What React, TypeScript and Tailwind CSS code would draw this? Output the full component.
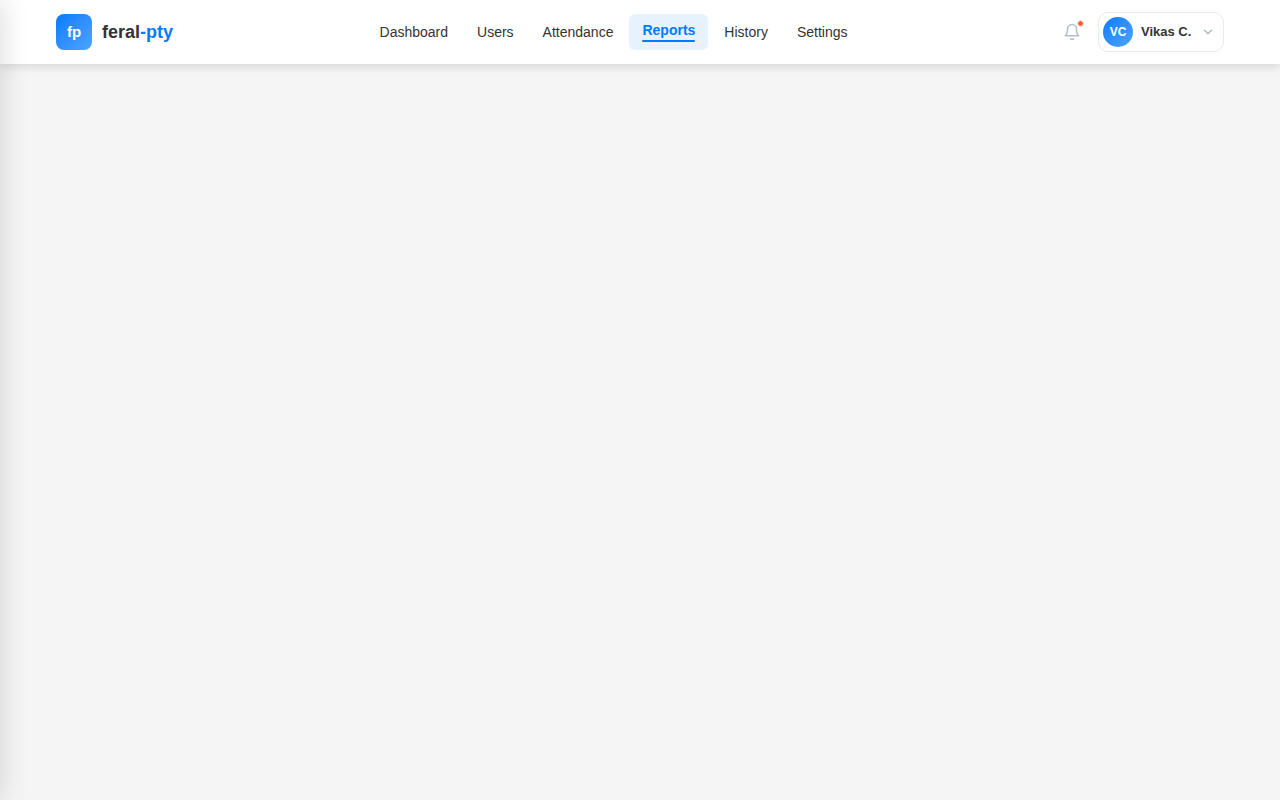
import { useState } from "react";

const links = ["Dashboard", "Users", "Attendance", "Reports", "History", "Settings"];

function BellIcon() {
  return (
    <svg
      width="18"
      height="18"
      viewBox="0 0 24 24"
      fill="none"
      stroke="currentColor"
      strokeWidth="2"
      strokeLinecap="round"
      strokeLinejoin="round"
      aria-hidden="true"
    >
      <path d="M18 8A6 6 0 0 0 6 8c0 7-3 9-3 9h18s-3-2-3-9" />
      <path d="M13.73 21a2 2 0 0 1-3.46 0" />
    </svg>
  );
}

function ChevronIcon() {
  return (
    <svg
      width="14"
      height="14"
      viewBox="0 0 24 24"
      fill="none"
      stroke="currentColor"
      strokeWidth="2.5"
      strokeLinecap="round"
      strokeLinejoin="round"
      aria-hidden="true"
    >
      <polyline points="6 9 12 15 18 9" />
    </svg>
  );
}

function NavLink({ label, active, onSelect }: { label: string; active: boolean; onSelect: () => void }) {
  return (
    <a
      href={`#${label.toLowerCase()}`}
      onClick={onSelect}
      aria-current={active ? "page" : undefined}
      className={
        active
          ? "flex h-9 flex-col justify-center gap-0.5 rounded-md bg-[#e6f3ff] px-[13px] text-sm leading-4 font-bold text-[#007bff]"
          : "flex h-9 flex-col justify-center rounded-md px-[13px] text-sm leading-4 text-[#333333] hover:bg-[#f5f5f5]"
      }
    >
      {label}
      {active && <span className="h-0.5 rounded-full bg-[#007bff]" />}
    </a>
  );
}

export default function App() {
  const [current, setCurrent] = useState("Reports");

  return (
    <div className="min-h-screen overflow-x-hidden bg-[#f5f5f5] font-['Liberation_Sans',Arial,sans-serif] text-[#333333]">
      <header className="sticky top-0 bg-white shadow-[0_2px_10px_rgba(0,0,0,0.14)]">
        <div className="flex h-16 items-center justify-between px-14">
          <a href="#dashboard" className="flex items-center gap-2.5">
            <span className="flex size-9 items-center justify-center rounded-lg bg-linear-135 from-[#007bff] to-[#4da3ff] text-[15px] font-bold text-white">
              fp
            </span>
            <span className="text-lg font-bold">
              feral<span className="text-[#007bff]">-pty</span>
            </span>
          </a>

          <nav className="flex items-center gap-[3px]" aria-label="Main">
            {links.map((label) => (
              <NavLink key={label} label={label} active={label === current} onSelect={() => setCurrent(label)} />
            ))}
          </nav>

          <div className="flex items-center gap-2">
            <button
              type="button"
              aria-label="Notifications"
              className="relative flex size-9 items-center justify-center rounded-lg text-[#b0bec5]"
            >
              <BellIcon />
              <span className="absolute top-1.5 right-1.5 size-[7px] rounded-full border border-white bg-[#ff5c2e]" />
            </button>
            <button
              type="button"
              className="flex h-10 items-center gap-2 rounded-[10px] border border-[#e8eaed] pr-2 pl-1 text-[13px] font-bold"
            >
              <span className="flex size-[30px] items-center justify-center rounded-full bg-linear-135 from-[#007bff] to-[#4da3ff] text-xs text-white">
                VC
              </span>
              <span className="min-w-[52px] text-left leading-4">Vikas C.</span>
              <span className="text-[#b0bec5]">
                <ChevronIcon />
              </span>
            </button>
          </div>
        </div>
      </header>

      {/* closed drawer, parked off the left edge */}
      <aside
        className="fixed inset-y-0 left-0 z-10 w-72 -translate-x-full bg-white shadow-[4px_0_24px_rgba(0,0,0,0.12)]"
        aria-hidden="true"
      />
    </div>
  );
}
